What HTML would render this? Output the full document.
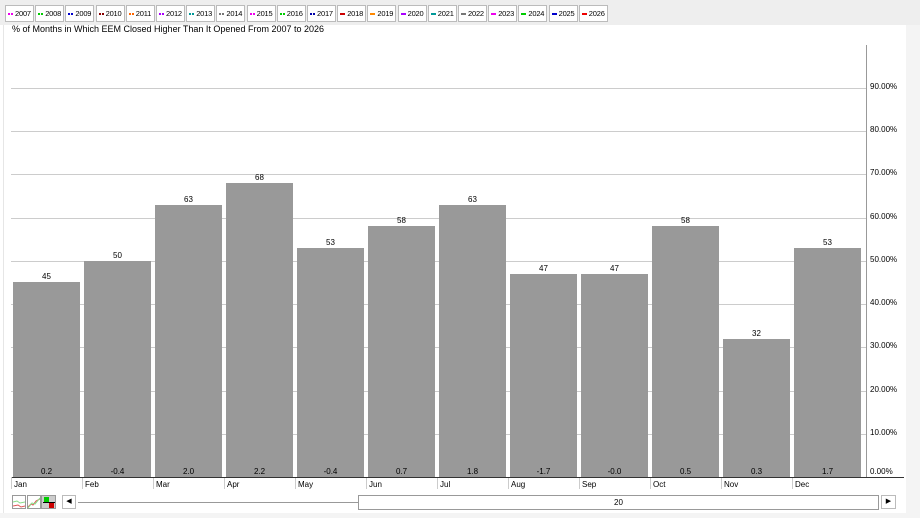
<!DOCTYPE html><html><head><style>
body{margin:0;width:920px;height:518px;background:#fff;font-family:"Liberation Sans",sans-serif;position:relative;overflow:hidden}
div{position:absolute;box-sizing:border-box}
.lb{top:5px;height:17px;border:1px solid #bbb;background:#fff;font-size:7.5px;line-height:15px;padding-left:9px;color:#000;white-space:nowrap;letter-spacing:-0.2px}
.lb span{position:absolute;left:2px;top:7px;height:2px}
.g{left:11px;width:855px;height:1px;background:#ccc}
.y{left:870px;font-size:8px;color:#000}
.b{background:#999;width:67px}
.v{font-size:8px;width:67px;text-align:center}
.m{font-size:8px;top:480px}
.t{top:477px;width:1px;height:12px;background:#ccc}
</style></head><body>
<div style="left:0;top:0;width:920px;height:25px;background:#eee"></div>
<div style="left:3px;top:25px;width:1px;height:490px;background:#e6e6e6"></div>
<div style="left:906px;top:25px;width:14px;height:493px;background:#f4f4f4"></div>
<div style="left:0;top:513px;width:920px;height:5px;background:#f4f4f4"></div>
<div id="leg"></div>
<div style="left:12px;top:24px;font-size:9px">% of Months in Which EEM Closed Higher Than It Opened From 2007 to 2026</div>
<div style="left:866px;top:45px;width:1px;height:433px;background:#999"></div>
<div id="ch"></div>
<div style="left:11px;top:477px;width:893px;height:1px;background:#333"></div>
<div style="left:11px;top:477px;width:1px;height:12px;background:#ccc"></div>
<div style="left:12px;top:495px;width:14px;height:14px;border:1px solid #999;background:#fff"><svg width="12" height="12"><polyline points="0,5 4,4 7,6 12,5" fill="none" stroke="#8d8" /><polyline points="0,9 5,8 8,10 12,9" fill="none" stroke="#d55"/></svg></div>
<div style="left:27px;top:495px;width:14px;height:14px;border:1px solid #999;background:#fff"><svg width="12" height="12"><polyline points="0,10 3,7 5,8 8,4 12,2" fill="none" stroke="#d55"/><polyline points="0,11 4,6 7,7 12,1" fill="none" stroke="#8d8"/></svg></div>
<div style="left:41px;top:495px;width:15px;height:14px;border:1px solid #999;background:#ccc"><div style="left:2px;top:1px;width:5px;height:5px;background:#0c0"></div><div style="left:7px;top:7px;width:5px;height:5px;background:#c00"></div><div style="left:1px;top:6px;width:12px;height:1px;background:#000"></div></div>
<div style="left:62px;top:495px;width:14px;height:14px;border:1px solid #bbb;background:#fff;font-size:7px;text-align:center;line-height:12px">◀</div>
<div style="left:78px;top:502px;width:280px;height:1px;background:#999"></div>
<div style="left:358px;top:495px;width:521px;height:15px;border:1px solid #999;background:#fff;font-size:8px;text-align:center;line-height:13px">20</div>
<div style="left:881px;top:495px;width:15px;height:14px;border:1px solid #bbb;background:#fff;font-size:7px;text-align:center;line-height:12px">▶</div>
<script>
var cols=["#e0e","#0c0","#00c","#800","#f60","#a0f","#099","#777","#e0e","#0c0","#00a","#c00","#f80","#a0f","#099","#777","#e0e","#0c0","#00c","#e00"];
var h="";for(var i=0;i<20;i++){var x=5+i*30.2;var dash=i>=11;h+='<div class="lb" style="left:'+x+'px;width:29px"><span style="width:5px;'+(dash?'background:'+cols[i]:'background:linear-gradient(90deg,'+cols[i]+' 0 2px,transparent 2px 3px,'+cols[i]+' 3px 5px)')+'"></span>'+(2007+i)+'</div>'}
document.getElementById("leg").outerHTML=h;
var c="";for(var p=10;p<=90;p+=10){var y=477-p*4.325;c+='<div class="g" style="top:'+Math.round(y)+'px"></div><div class="y" style="top:'+Math.round(y-6)+'px">'+p+'.00%</div>'}
c+='<div class="y" style="top:467px">0.00%</div>';
var v=[45,50,63,68,53,58,63,47,47,58,32,53],s=["0.2","-0.4","2.0","2.2","-0.4","0.7","1.8","-1.7","-0.0","0.5","0.3","1.7"],m=["Jan","Feb","Mar","Apr","May","Jun","Jul","Aug","Sep","Oct","Nov","Dec"];
for(var k=0;k<12;k++){var x=13+k*71,t=Math.round(477-v[k]*4.325);c+='<div class="b" style="left:'+x+'px;top:'+t+'px;height:'+(477-t)+'px"></div><div class="v" style="left:'+x+'px;top:'+(t-10)+'px">'+v[k]+'</div><div class="v" style="left:'+x+'px;top:467px">'+s[k]+'</div><div class="m" style="left:'+(x+1)+'px">'+m[k]+'</div>';if(k)c+='<div class="t" style="left:'+(x-2)+'px"></div>'}
document.getElementById("ch").outerHTML=c;
</script>
</body></html>
